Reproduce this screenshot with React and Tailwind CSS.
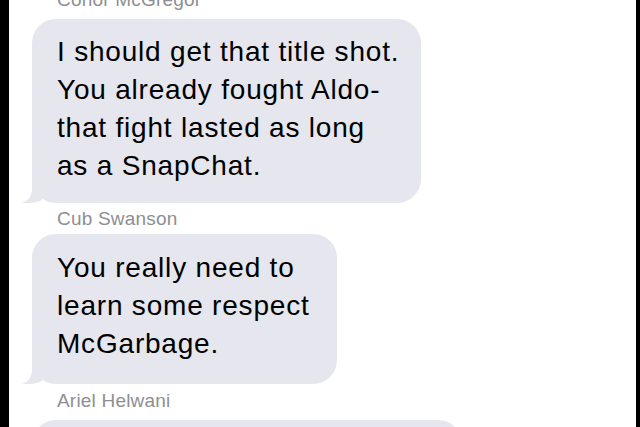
import React from "react";

function Tail() {
  return (
    <svg
      className="absolute bottom-0 left-[-10px]"
      width="30"
      height="22"
      viewBox="0 0 30 22"
    >
      <path
        d="M10 0 L10 8 C10 15 6 20 0 22 C6 22.5 14 22 20 19 L20 0 Z"
        fill="#e5e6ee"
      />
    </svg>
  );
}

export default function App() {
  return (
    <div className="flex h-[427px] w-[640px] overflow-hidden bg-black [font-family:'Liberation_Sans',Arial,sans-serif]">
      <div className="w-[9px] shrink-0 bg-black" />
      <div className="flex-1 overflow-hidden bg-white">
        <div className="-mt-[16px] flex flex-col items-start pl-[23px]">
          <div className="pl-[25px] pt-[4px] pb-[7px] text-[19px] leading-[24px] tracking-[0.2px] text-[#8e8e93]">
            Conor McGregor
          </div>
          <div className="relative w-[389px] rounded-[24px] bg-[#e5e6ee] pl-[25px] pt-[14px] pb-[18px] text-[28px] leading-[38px] tracking-[0.8px] whitespace-nowrap text-black">
            <Tail />
            <span className="relative block">I should get that title shot.</span>
            <span className="relative block">You already fought Aldo-</span>
            <span className="relative block">that fight lasted as long</span>
            <span className="relative block">as a SnapChat.</span>
          </div>
          <div className="pl-[25px] pt-[4px] pb-[3px] text-[19px] leading-[24px] tracking-[0.2px] text-[#8e8e93]">
            Cub Swanson
          </div>
          <div className="relative w-[305px] rounded-[24px] bg-[#e5e6ee] pl-[25px] pt-[15px] pb-[21px] text-[28px] leading-[38px] tracking-[0.8px] whitespace-nowrap text-black">
            <Tail />
            <span className="relative block">You really need to</span>
            <span className="relative block">learn some respect</span>
            <span className="relative block">McGarbage.</span>
          </div>
          <div className="pl-[25px] pt-[5px] pb-[7px] text-[19px] leading-[24px] tracking-[0.2px] text-[#8e8e93]">
            Ariel Helwani
          </div>
          <div className="relative h-[80px] w-[430px] rounded-[24px] bg-[#e5e6ee]" />
        </div>
      </div>
      <div className="w-[4px] shrink-0 bg-black" />
    </div>
  );
}
